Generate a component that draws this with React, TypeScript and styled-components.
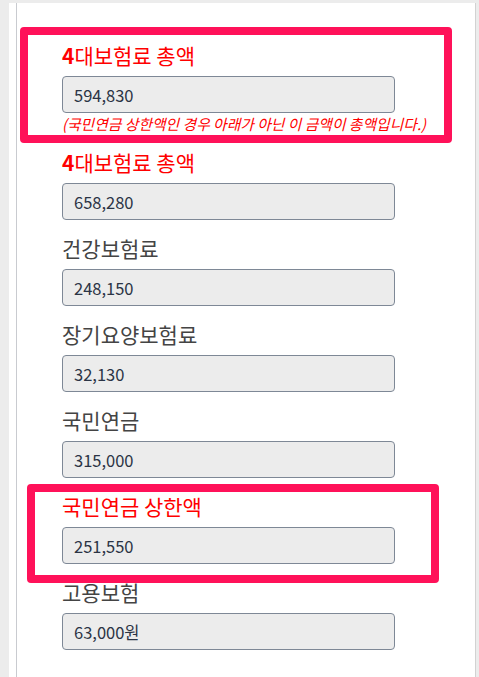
import React from "react";
import styled, { createGlobalStyle, css } from "styled-components";

const Global = createGlobalStyle`
  html, body { margin: 0; padding: 0; }
  body {
    background: #ececec;
    font-family: "Noto Sans CJK KR", "Noto Sans", sans-serif;
  }
`;

const Frame = styled.div`
  margin: 3px 0 0 9px;
  width: 467px;
  min-height: 674px;
  background: #ffffff;
  border-right: 1px solid #d2d2d2;
  padding-left: 7px;
  box-sizing: border-box;
  display: flex;
`;

const Panel = styled.div`
  flex: 1;
  border-left: 1px solid #c9cbd0;
  padding: 36px 0 0 45px;
  display: flex;
  flex-direction: column;
`;

type Box = { top: number; right: number; bottom: number; left: number };

const Group = styled.div<{ $mark?: Box }>`
  position: relative;
  width: 333px;
  display: flex;
  flex-direction: column;
  margin-bottom: 12px;
  ${(p) =>
    p.$mark &&
    css`
      &::after {
        content: "";
        position: absolute;
        top: ${p.$mark.top}px;
        right: ${p.$mark.right}px;
        bottom: ${p.$mark.bottom}px;
        left: ${p.$mark.left}px;
        border: 8px solid #ff1159;
        border-radius: 4px;
        pointer-events: none;
      }
    `}
`;

const Label = styled.label<{ $red?: boolean }>`
  display: block;
  height: 30px;
  line-height: 32px;
  font-size: 21px;
  font-weight: 400;
  color: ${(p) => (p.$red ? "#ff0000" : "#444444")};
  margin-bottom: 7px;
  white-space: nowrap;
`;

const Num = styled.b`
  font-weight: 700;
`;

const Field = styled.div`
  height: 37px;
  box-sizing: border-box;
  border: 1px solid #7e8896;
  border-radius: 4px;
  background: #ececec;
  padding: 0 11px;
  display: flex;
  align-items: center;
  font-size: 16.5px;
  color: #2b3445;
`;

const Note = styled.div`
  height: 21px;
  line-height: 21px;
  font-size: 14.8px;
  font-style: italic;
  color: #ff0000;
  white-space: nowrap;
`;

type Row = { label: React.ReactNode; value: string; red?: boolean; mark?: Box };

const totalLabel = (
  <>
    <Num>4</Num>대보험료 총액
  </>
);

const rows: Row[] = [
  { label: totalLabel, value: "658,280", red: true },
  { label: "건강보험료", value: "248,150" },
  { label: "장기요양보험료", value: "32,130" },
  { label: "국민연금", value: "315,000" },
  {
    label: "국민연금 상한액",
    value: "251,550",
    red: true,
    mark: { top: -6, right: -44, bottom: -19, left: -35 },
  },
  { label: "고용보험", value: "63,000원" },
];

export default function App() {
  return (
    <>
      <Global />
      <Frame>
        <Panel>
          <Group $mark={{ top: -12, right: -57, bottom: -9, left: -42 }}>
            <Label $red>{totalLabel}</Label>
            <Field>594,830</Field>
            <Note>(국민연금 상한액인 경우 아래가 아닌 이 금액이 총액입니다.)</Note>
          </Group>
          {rows.map((r, i) => (
            <Group key={i} $mark={r.mark}>
              <Label $red={r.red}>{r.label}</Label>
              <Field>{r.value}</Field>
            </Group>
          ))}
        </Panel>
      </Frame>
    </>
  );
}
